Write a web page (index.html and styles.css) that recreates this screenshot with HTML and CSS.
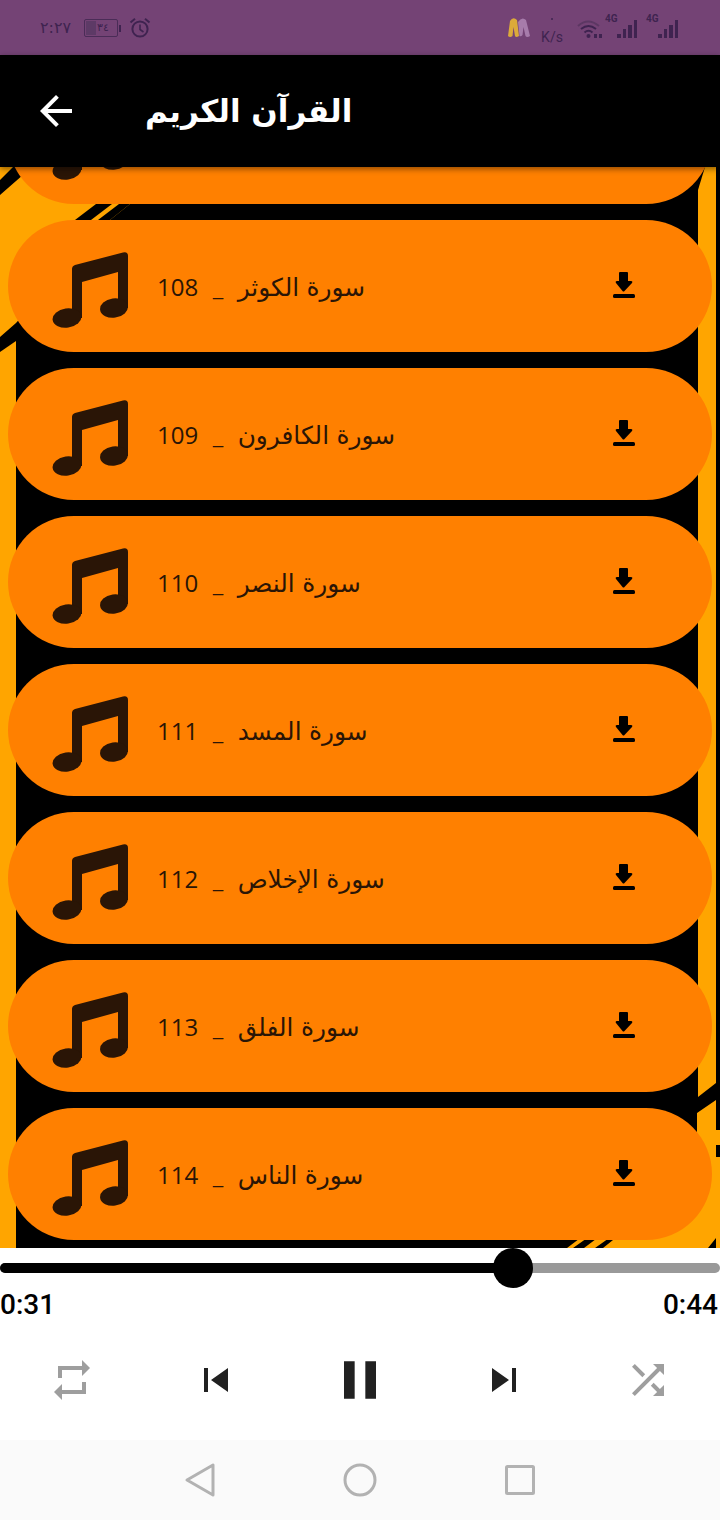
FILE: index.html
```html
<!DOCTYPE html>
<html lang="ar">
<head>
  <meta charset="UTF-8">
  <title>القرآن الكريم</title>
  <link rel="stylesheet" href="styles.css">
</head>
<body>
  <svg width="0" height="0" class="defs">
    <defs>
      <g id="note">
        <path d="M20 17Q20 14 23 13L71 .5Q76 -.5 76 4V56H66V20L30 30V66H20Z"/>
        <ellipse cx="15" cy="66" rx="14.500" ry="9.700" transform="rotate(-8 15 66)"/>
        <ellipse cx="62" cy="56" rx="14" ry="9.700" transform="rotate(-8 62 56)"/>
      </g>
      <g id="download">
        <path d="M6 1Q6 0 7 0H14Q15 0 15 1V9H18Q20 9 19 11L11.500 19Q10.500 20 9.500 19L3 11Q2 9 4 9H6Z"/>
        <rect x="0" y="22" width="22" height="4" rx="1.500"/>
      </g>
    </defs>
  </svg>

  <div class="page">
    <div class="status-bar">
      <div class="status-left">
        <span class="clock">٢:٢٧</span>
        <div class="battery"><span class="battery-level"></span><span class="battery-text">٣٤</span></div>
        <svg class="alarm" width="22" height="22" viewBox="0 0 22 22">
          <circle cx="11" cy="12" r="7.600" fill="none" stroke="#3f2350" stroke-width="2"/>
          <path d="M11 7.500V12.500L14.500 15" fill="none" stroke="#3f2350" stroke-width="1.600"/>
          <path d="M1.500 5.500L6 1.800M20.500 5.500L16 1.800" stroke="#3f2350" stroke-width="2"/>
        </svg>
      </div>
      <div class="status-right">
        <svg class="logo" width="24" height="24" viewBox="0 0 24 24">
          <path d="M1 20L3 5Q6 0 10 4L12 20Q9 22 8 20L6.500 11 5.500 20Q3 22 1 20Z" fill="#dcaa3a"/>
          <path d="M11 6Q15 0 19 4L23 20Q20 22 18.500 20L16.500 11 15.500 19Q14 21 12.500 20Z" fill="#a77cab"/>
        </svg>
        <div class="speed"><span class="speed-dot"></span><span>K/s</span></div>
        <svg class="wifi" width="26" height="22" viewBox="0 0 26 22">
          <path d="M1 8Q11 -1 22 8" fill="none" stroke="#5c3763" stroke-width="2"/>
          <path d="M4 11Q11.500 5 19 11" fill="none" stroke="#3f2350" stroke-width="2"/>
          <path d="M7.500 14.500Q11.500 11 15.500 14.500" fill="none" stroke="#3f2350" stroke-width="2"/>
          <circle cx="11.500" cy="18" r="2" fill="#3f2350"/>
          <path d="M17 16h3v4h-3zM22 16h3v4h-3z" fill="#3f2350"/>
        </svg>
        <div class="signal sim-1"><span class="net">4G</span><span class="bar bar-1"></span><span class="bar bar-2"></span><span class="bar bar-3"></span><span class="bar bar-4"></span></div>
        <div class="signal sim-2"><span class="net">4G</span><span class="bar bar-1"></span><span class="bar bar-2"></span><span class="bar bar-3"></span><span class="bar bar-4"></span></div>
      </div>
    </div>

    <header class="app-bar">
      <svg class="back" width="48" height="48" viewBox="0 0 24 24"><path fill="#fff" d="M20 11H7.830l5.590-5.590L12 4l-8 8 8 8 1.410-1.410L7.830 13H20v-2z"/></svg>
      <h1>القرآن الكريم</h1>
    </header>

    <main class="content">
      <svg class="wallpaper" viewBox="0 167 720 1081" width="720" height="1081" preserveAspectRatio="none">
        <rect x="0" y="167" width="720" height="1081" fill="#000"/>
        <path d="M0 167H13L0 180ZM32 167H170L130 204 110 220 16 323 0 337V195Z" fill="#ffa500"/>
        <path d="M75 220L96 204H112L91 220ZM98 220L119 204H130L110 220Z" fill="#000"/>
        <path d="M0 352L16 341V1248H0Z" fill="#ffa500"/>
        <path d="M705 167H716V1083L698 1097V190Z" fill="#ffa500"/>
        <path d="M716 1100V1248H567L697 1150V1113Z" fill="#ffa500"/>
        <path d="M716 1130H720V1145H716ZM716 1157H720V1248H716Z" fill="#ffa500"/>
        <path d="M573 1248L590 1236H600L584 1248ZM595 1248L612 1236H618L603 1248ZM708 1248L716 1238V1248Z" fill="#000"/>
      </svg>
      <div class="track-list">
        <div class="track">
          <svg class="note" width="76" height="76" viewBox="0 0 76 76"><use href="#note"/></svg>
          <span class="track-name"></span>
          <svg class="dl" width="22" height="26" viewBox="0 0 22 26"><use href="#download"/></svg>
        </div>
        <div class="track">
          <svg class="note" width="76" height="76" viewBox="0 0 76 76"><use href="#note"/></svg>
          <span class="track-name">108 &nbsp;_&nbsp; <span class="ar">سورة الكوثر</span></span>
          <svg class="dl" width="22" height="26" viewBox="0 0 22 26"><use href="#download"/></svg>
        </div>
        <div class="track">
          <svg class="note" width="76" height="76" viewBox="0 0 76 76"><use href="#note"/></svg>
          <span class="track-name">109 &nbsp;_&nbsp; <span class="ar">سورة الكافرون</span></span>
          <svg class="dl" width="22" height="26" viewBox="0 0 22 26"><use href="#download"/></svg>
        </div>
        <div class="track">
          <svg class="note" width="76" height="76" viewBox="0 0 76 76"><use href="#note"/></svg>
          <span class="track-name">110 &nbsp;_&nbsp; <span class="ar">سورة النصر</span></span>
          <svg class="dl" width="22" height="26" viewBox="0 0 22 26"><use href="#download"/></svg>
        </div>
        <div class="track">
          <svg class="note" width="76" height="76" viewBox="0 0 76 76"><use href="#note"/></svg>
          <span class="track-name">111 &nbsp;_&nbsp; <span class="ar">سورة المسد</span></span>
          <svg class="dl" width="22" height="26" viewBox="0 0 22 26"><use href="#download"/></svg>
        </div>
        <div class="track">
          <svg class="note" width="76" height="76" viewBox="0 0 76 76"><use href="#note"/></svg>
          <span class="track-name">112 &nbsp;_&nbsp; <span class="ar">سورة الإخلاص</span></span>
          <svg class="dl" width="22" height="26" viewBox="0 0 22 26"><use href="#download"/></svg>
        </div>
        <div class="track">
          <svg class="note" width="76" height="76" viewBox="0 0 76 76"><use href="#note"/></svg>
          <span class="track-name">113 &nbsp;_&nbsp; <span class="ar">سورة الفلق</span></span>
          <svg class="dl" width="22" height="26" viewBox="0 0 22 26"><use href="#download"/></svg>
        </div>
        <div class="track">
          <svg class="note" width="76" height="76" viewBox="0 0 76 76"><use href="#note"/></svg>
          <span class="track-name">114 &nbsp;_&nbsp; <span class="ar">سورة الناس</span></span>
          <svg class="dl" width="22" height="26" viewBox="0 0 22 26"><use href="#download"/></svg>
        </div>
      </div>
    </main>

    <section class="player">
      <div class="slider">
        <div class="slider-fill" style="width: 71.25%"><span class="thumb"></span></div>
      </div>
      <div class="times"><span>0:31</span><span>0:44</span></div>
      <div class="controls">
        <svg width="48" height="48" viewBox="0 0 24 24" fill="#9e9e9e"><path d="M7 7h10v3l4-4-4-4v3H5v6h2V7zm10 10H7v-3l-4 4 4 4v-3h12v-6h-2v4z"/></svg>
        <svg width="48" height="48" viewBox="0 0 24 24" fill="#212121"><path d="M6 6h2v12H6zm3.500 6l8.500 6V6z"/></svg>
        <svg class="pause" width="64" height="64" viewBox="0 0 24 24" fill="#212121"><path d="M6 19h4V5H6v14zm8-14v14h4V5h-4z"/></svg>
        <svg width="48" height="48" viewBox="0 0 24 24" fill="#212121"><path d="M6 18l8.500-6L6 6v12zM16 6v12h2V6h-2z"/></svg>
        <svg width="48" height="48" viewBox="0 0 24 24" fill="#9e9e9e"><path d="M10.590 9.170L5.410 4 4 5.410l5.170 5.170 1.420-1.410zM14.500 4l2.040 2.040L4 18.590 5.410 20 17.960 7.460 20 9.500V4h-5.500zm.33 9.410l-1.410 1.410 3.130 3.130L14.500 20H20v-5.500l-2.040 2.040-3.130-3.130z"/></svg>
      </div>
    </section>

    <nav class="nav-bar">
      <svg width="32" height="36" viewBox="0 0 32 36"><path d="M29 3V33L3 18Z" fill="none" stroke="#b2b2b2" stroke-width="3" stroke-linejoin="round"/></svg>
      <svg width="36" height="36" viewBox="0 0 36 36"><circle cx="18" cy="18" r="15" fill="none" stroke="#b2b2b2" stroke-width="3"/></svg>
      <svg width="32" height="32" viewBox="0 0 32 32"><rect x="2.500" y="2.500" width="27" height="27" rx="1" fill="none" stroke="#b2b2b2" stroke-width="3"/></svg>
    </nav>
  </div>
</body>
</html>
```

FILE: styles.css
```css
* { box-sizing: border-box; }
body { margin: 0; background: #fff; font-family: "DejaVu Sans", sans-serif; }
.defs { position: absolute; }
.page { width: 720px; height: 1520px; display: flex; flex-direction: column; overflow: hidden; }

.status-bar { height: 55px; background: #744375; color: #3f2350; display: flex; justify-content: space-between; align-items: center; padding: 0 42px 0 40px; flex: none; }
.status-left { display: flex; align-items: center; gap: 11px; }
.clock { font-size: 16px; width: 33px; }
.battery { width: 34px; height: 18px; border: 1px solid #4a2c57; border-radius: 2px; position: relative; font-size: 11px; display: flex; align-items: center; justify-content: center; }
.battery:after { content: ""; position: absolute; right: -4px; top: 5px; width: 2px; height: 7px; background: #3f2350; }
.battery-level { position: absolute; left: 1px; top: 1px; bottom: 1px; width: 10px; background: #5d3a66; }
.battery-text { position: relative; padding-left: 4px; }
.status-right { display: flex; align-items: flex-start; height: 30px; }
.logo { margin-top: 3px; }
.speed { display: flex; flex-direction: column; align-items: center; font-family: "Roboto", sans-serif; font-size: 14px; line-height: 14px; gap: 10px; width: 24px; margin: 5px 0 0 9px; }
.speed-dot { width: 2px; height: 2px; background: #3f2350; border-radius: 50%; }
.wifi { margin: 5px 0 0 13px; }
.signal { display: flex; align-items: flex-end; gap: 2px; height: 24px; position: relative; padding-left: 12px; margin-top: 1px; }
.sim-1 { margin-left: 2px; }
.sim-2 { margin-left: 9px; }
.net { position: absolute; left: 0; top: 0; font-family: "Roboto", sans-serif; font-size: 10px; line-height: 10px; font-weight: 700; }
.bar { width: 3.5px; background: #3f2350; }
.bar-1 { height: 4px; }
.bar-2 { height: 9px; }
.bar-3 { height: 13px; }
.bar-4 { height: 18px; }

.app-bar { height: 112px; background: #000; color: #fff; display: flex; align-items: center; padding-left: 32px; gap: 65px; flex: none; position: relative; z-index: 2; box-shadow: 0 2px 6px rgba(0,0,0,.45); }
.app-bar h1 { margin: 0; font-size: 31px; font-weight: 700; }

.content { flex: 1; position: relative; overflow: hidden; }
.wallpaper { position: absolute; left: 0; top: 0; display: block; }
.track-list { position: relative; display: flex; flex-direction: column; gap: 16px; margin-top: -95px; padding: 0 8px; }
.track { height: 132px; background: #ff8000; border-radius: 66px; display: flex; align-items: center; padding: 0 77px 0 44px; flex: none; }
.note { fill: #2a1506; flex: none; margin-top: 8px; }
.track-name { font-family: "Open Sans", "DejaVu Sans", sans-serif; font-size: 24px; color: #2a1506; margin-left: 29px; flex: 1; white-space: pre; word-spacing: 1px; }
.ar { font-size: 24.8px; }
.dl { fill: #000; flex: none; margin-top: -2px; }

.player { height: 192px; background: #fff; flex: none; display: flex; flex-direction: column; padding-top: 15px; }
.slider { height: 10px; background: #999; border-radius: 5px; flex: none; }
.slider-fill { height: 10px; background: #000; border-radius: 5px; position: relative; }
.thumb { position: absolute; right: -20px; top: -15px; width: 40px; height: 40px; background: #000; border-radius: 50%; }
.times { display: flex; justify-content: space-between; font-family: "Roboto", sans-serif; font-size: 28px; font-weight: 500; color: #000; padding: 0 2px 0 0; margin-top: 16px; line-height: 32px; }
.controls { display: flex; align-items: center; justify-content: space-between; padding: 0 48px; margin-top: 27px; }
.controls svg { flex: none; display: block; }
.controls .pause { margin: 0 -8px; }

.nav-bar { height: 80px; background: #fafafa; flex: none; display: grid; grid-template-columns: repeat(3, 160px); justify-content: center; align-items: center; }
.nav-bar svg { justify-self: center; }
```
